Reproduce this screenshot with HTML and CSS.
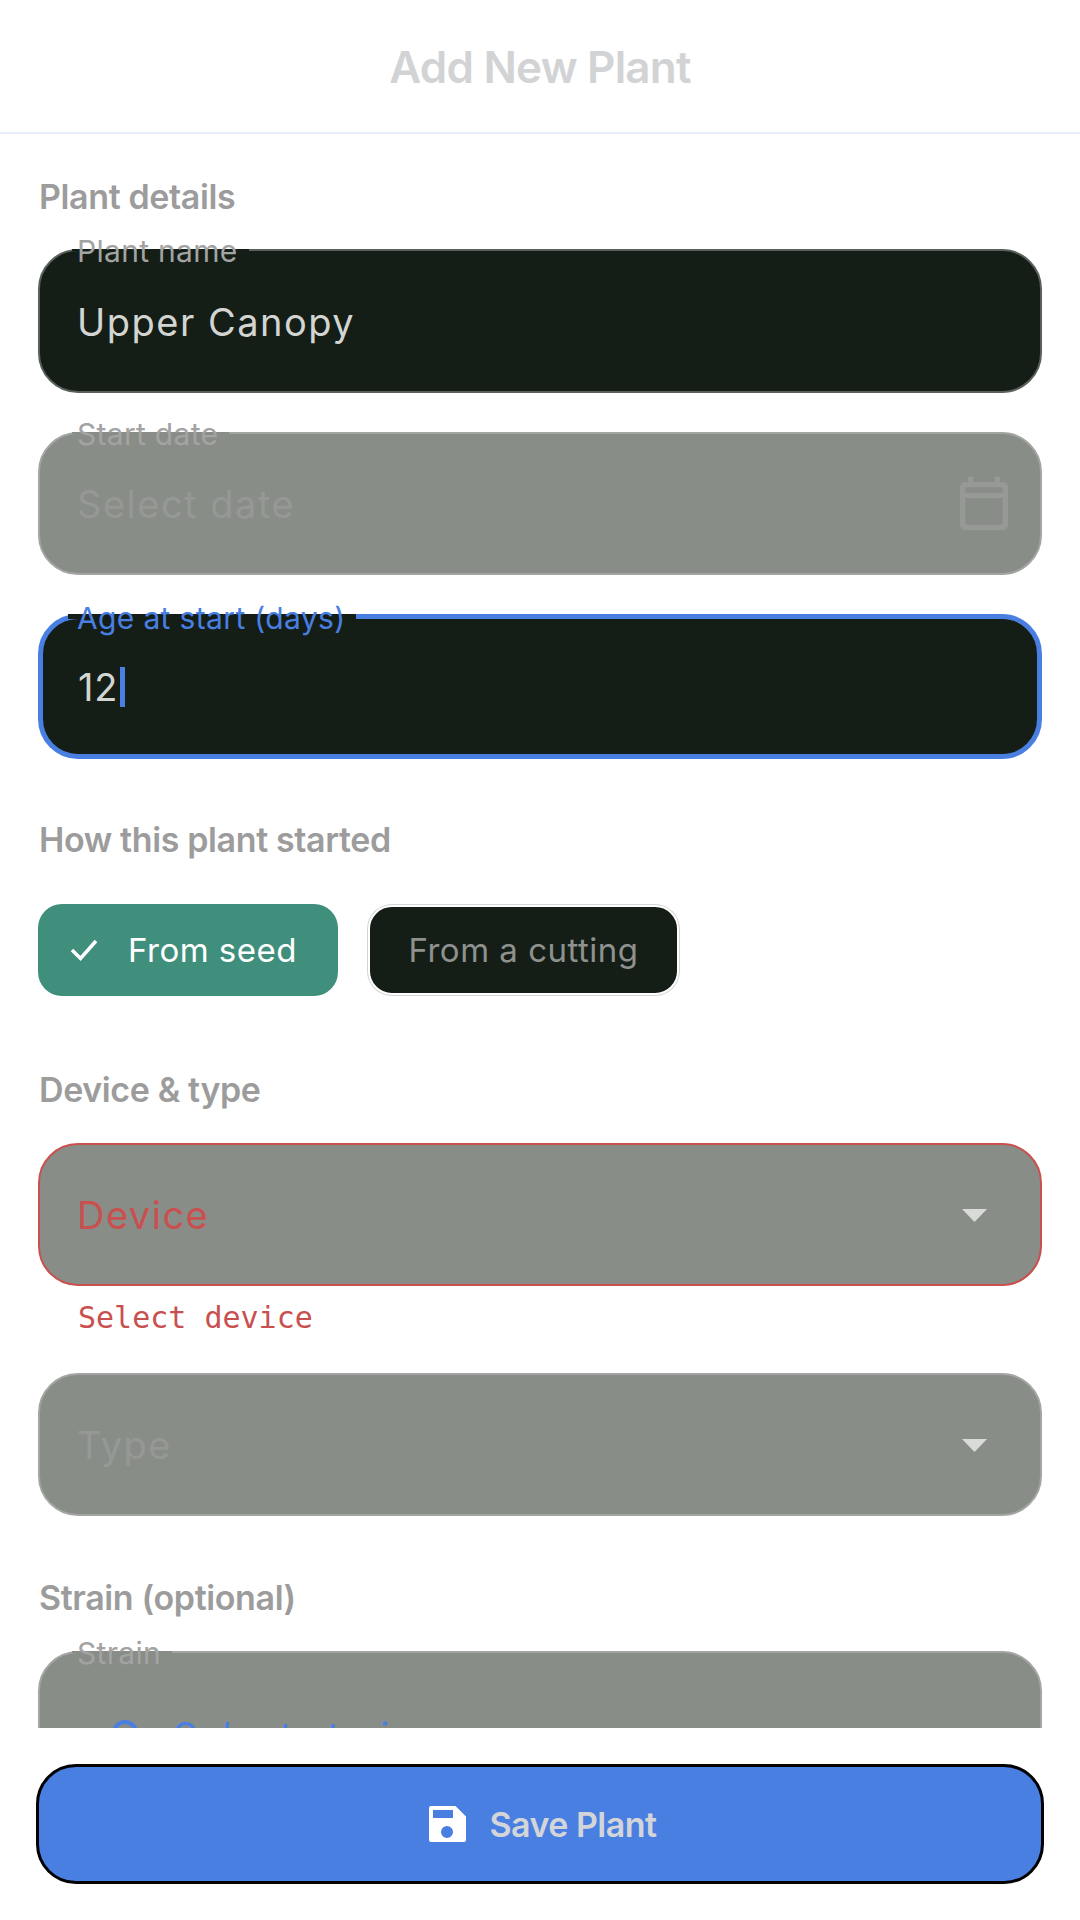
FILE: index.html
```html
<!DOCTYPE html>
<html lang="en">
<head>
<meta charset="utf-8">
<title>Add New Plant</title>
<link rel="stylesheet" href="styles.css">
</head>
<body>
<div class="screen">
  <header class="header"><h1 class="title">Add New Plant</h1></header>
  <main class="scroll">
    <h2 class="section first">Plant details</h2>
    <div class="field filled name">
      <span class="label">Plant name</span>
      <span class="value">Upper Canopy</span>
    </div>
    <div class="field disabled">
      <span class="label">Start date</span>
      <span class="value muted">Select date</span>
      <svg class="cal" viewBox="0 0 24 24"><path fill-rule="evenodd" d="M19 3h-1V1h-2v2H8V1H6v2H5a2 2 0 0 0-2 2v14a2 2 0 0 0 2 2h14a2 2 0 0 0 2-2V5a2 2 0 0 0-2-2zM19 5v2H5V5zM5 19V9h14v10z"/></svg>
    </div>
    <div class="field filled focused">
      <span class="label">Age at start (days)</span>
      <span class="value num">12</span><span class="caret"></span>
    </div>

    <h2 class="section started">How this plant started</h2>
    <div class="chips">
      <div class="chip selected">
        <svg class="check" viewBox="0 0 28 24"><path d="M2 12l8.500 8.500L26 3"/></svg>
        <span>From seed</span>
      </div>
      <div class="chip plain"><span>From a cutting</span></div>
    </div>

    <h2 class="section type">Device &amp; type</h2>
    <div class="field disabled error">
      <span class="value err">Device</span>
      <svg class="drop" viewBox="0 0 25 13"><path d="M0 0h25L12.500 13z"/></svg>
    </div>
    <p class="helper">Select device</p>
    <div class="field disabled after-helper">
      <span class="value muted">Type</span>
      <svg class="drop" viewBox="0 0 25 13"><path d="M0 0h25L12.500 13z"/></svg>
    </div>

    <h2 class="section strain">Strain (optional)</h2>
    <div class="field disabled top">
      <span class="label">Strain</span>
      <div class="pick">
        <svg class="search" viewBox="0 0 34 34"><circle cx="14" cy="14" r="11"/><path d="M22 22l10 10"/></svg>
        <span class="pick-text">Select strain</span>
      </div>
    </div>
  </main>
  <footer class="footer">
    <button class="save" type="button">
      <svg class="disk" viewBox="0 0 37 36"><path fill-rule="evenodd" d="M2 0h24.500L37 10.500V34a2 2 0 0 1-2 2H2a2 2 0 0 1-2-2V2a2 2 0 0 1 2-2zM4 4v8h20V4zM18 20a6 6 0 1 0 0 12 6 6 0 0 0 0-12z"/></svg>
      <span>Save Plant</span>
    </button>
  </footer>
</div>
</body>
</html>
```

FILE: styles.css
```css
* { box-sizing: border-box; }
html, body { margin: 0; padding: 0; background: #fff; }
body { font-family: Inter, "Noto Sans", sans-serif; }
.screen { width: 1080px; height: 1920px; display: flex; flex-direction: column; overflow: hidden; }

.header { height: 134px; padding-top: 2px; border-bottom: 2px solid #e7eefa; display: flex; align-items: center; justify-content: center; }
.title { margin: 0; font-size: 44px; font-weight: 600; line-height: 52px; letter-spacing: -0.8px; color: #d2d3d5; }

.scroll { height: 1594px; padding: 0 38px; overflow: hidden; flex: none; }
.section { margin: 0; padding-left: 1px; font-size: 34px; line-height: 40px; font-weight: 600; letter-spacing: -0.38px; color: #9c9c9c; }
.section.first { margin-top: 43px; margin-bottom: 32px; }
.section.started { margin-top: 61px; margin-bottom: 44px; }
.section.type { margin-top: 74px; margin-bottom: 33px; }
.section.strain { margin-top: 62px; margin-bottom: 33px; }

.field { position: relative; height: 144px; margin-bottom: 39px; padding: 0 37px; border: 2px solid; border-radius: 40px; display: flex; align-items: center; }
.filled { background: #141e16; border-color: #5a605b; }
.name { padding-top: 2px; }
.disabled { height: 143px; background: #898d88; border-color: #a3a5a2; }
.focused { height: 145px; border: 5px solid #4a7fe2; padding: 0 35px; }
.error { border-color: #c9504f; margin-bottom: 0; }
.top { align-items: flex-start; margin-bottom: 0; }
.after-helper { margin-bottom: 0; }

.label { position: absolute; z-index: 1; left: 37px; top: -18px; font-size: 30px; line-height: 36px; letter-spacing: 0.3px; color: #a3a3a3; white-space: nowrap; }
.label::before { content: ""; position: absolute; z-index: -1; left: -5px; right: -11px; top: 16px; height: 2px; }
.filled .label::before { background: #141e16; }
.disabled .label::before { background: #898d88; }
.focused .label { left: 34px; top: -19px; letter-spacing: 0.35px; color: #4a7fe2; }
.focused .label::before { top: 14px; left: -9px; height: 5px; }

.value { font-size: 38px; line-height: 46px; letter-spacing: 1.5px; color: #d3d5d3; }
.muted { color: #969896; }
.err { color: #c9504f; }
.num { letter-spacing: 0.8px; }
.caret { width: 5px; height: 40px; margin-left: 2px; background: #4a7fe2; }

.cal { width: 64px; height: 64px; margin-left: auto; margin-right: -13px; margin-top: 5px; fill: #979997; }
.drop { width: 25px; height: 13px; margin-left: auto; margin-right: 16px; margin-top: 2px; fill: #d9dbd9; }

.chips { display: flex; align-items: center; gap: 30px; }
.chip { border-radius: 24px; display: flex; align-items: center; font-size: 33px; letter-spacing: 0.5px; }
.selected { width: 300px; height: 92px; padding-left: 32px; gap: 30px; background: #3f8f7c; color: #fff; }
.plain { width: 311px; height: 90px; justify-content: center; background: #141e16; color: #8f918f; border: 2px solid #fff; box-shadow: 0 0 0 1px #d4d4d4; }
.check { width: 28px; height: 24px; fill: none; stroke: #fff; stroke-width: 3.5; }

.helper { margin: 0; height: 87px; padding: 14px 0 0 40px; font-family: "DejaVu Sans Mono", "Liberation Mono", monospace; font-size: 30px; line-height: 36px; color: #c9504f; }

.pick { display: flex; align-items: center; gap: 28px; padding: 60px 0 0 34px; }
.search { width: 34px; height: 34px; fill: none; stroke: #4a7fe2; stroke-width: 4; }
.pick-text { font-size: 38px; line-height: 46px; color: #4a7fe2; letter-spacing: 1.5px; }

.footer { flex: 1; padding: 36px 36px 0; background: #fff; }
.save { width: 1008px; height: 120px; border: 3px solid #000; border-radius: 40px; background: #4a7fe2; display: flex; align-items: center; justify-content: center; gap: 23px; font-family: inherit; font-size: 34px; font-weight: 600; letter-spacing: -0.5px; color: #d3d5d8; padding: 0 0 0 6px; }
.disk { width: 37px; height: 36px; fill: #fff; }
```
